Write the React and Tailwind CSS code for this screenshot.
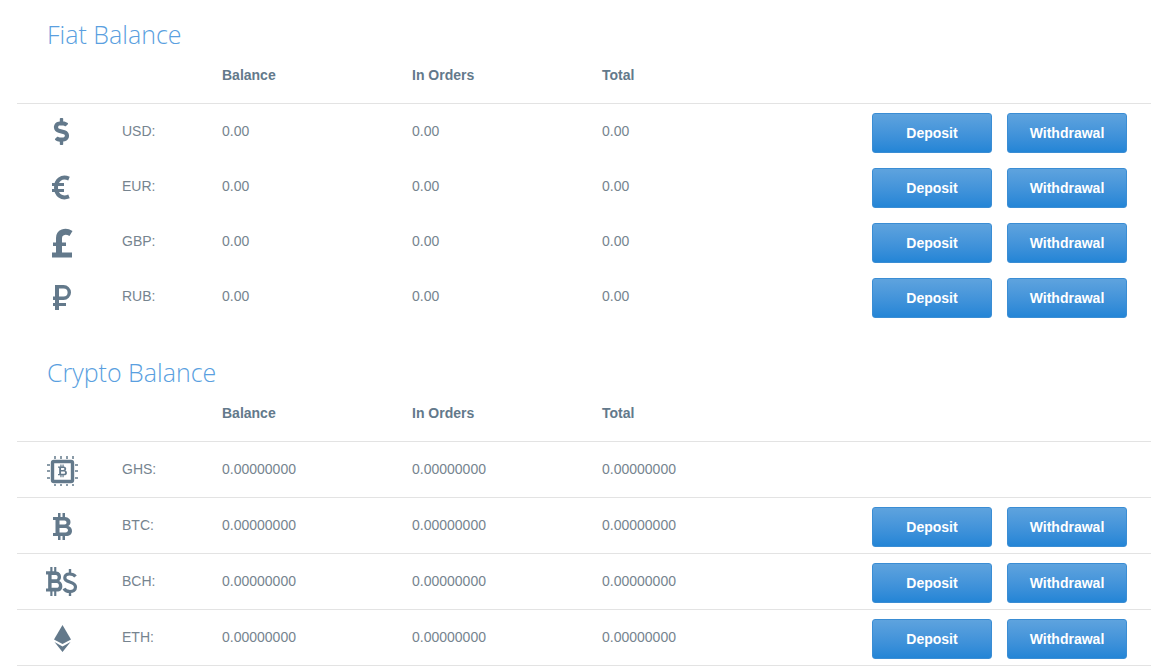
import React from "react";
import { FaDollarSign } from "react-icons/fa";

const Svg = ({ children }) => (
  <svg width="32" height="33" viewBox="0 0 32 33" className="text-[#63798b]" fill="currentColor" stroke="none">
    {children}
  </svg>
);

const BtcShape = () => (
  <path
    fillRule="evenodd"
    d="M5 0H7.5V4H9.5V0H12V4.1C15.6 4.5 17.5 6.4 17.5 9C17.5 10.9 16.7 12.3 15.3 13C17.6 13.7 19 15.6 19 18C19 21 16.8 23 13 23H12V27H9.5V23H7.5V27H5V23H0V20H2.5V7H0V4H5ZM6.5 7.5V11.5H11.5C13 11.5 13.5 10.5 13.5 9.5C13.5 8.5 13 7.5 11.5 7.5ZM6.5 15V19.5H12.5C14 19.5 15 18.5 15 17.3C15 16 14 15 12.5 15Z"
  />
);

const Dollar = () => <FaDollarSign className="text-[#63798b] text-[27px] mr-[2px]" />;

const Euro = () => (
  <Svg>
    <path d="M23 8.6C15.5 5.6 10 10 10 17.5C10 25 15.5 29.4 23 26.4" fill="none" stroke="currentColor" strokeWidth="4" />
    <path d="M6 13H18V16H6ZM6 19H18V22H6Z" />
  </Svg>
);

const Pound = () => (
  <Svg>
    <path d="M13 28V13C13 7.5 19 5 25 8.5" fill="none" stroke="currentColor" strokeWidth="6" />
    <path d="M6 27.5H26V32.5H6ZM7 17.5H20V21H7Z" />
  </Svg>
);

const Ruble = () => (
  <Svg>
    <path d="M11 5V30" fill="none" stroke="currentColor" strokeWidth="4" />
    <path d="M7 18.3H17.5A5.8 5.8 0 0 0 17.5 6.7H10" fill="none" stroke="currentColor" strokeWidth="3.4" />
    <path d="M7 23H20V26H7Z" />
  </Svg>
);

const Chip = () => (
  <Svg>
    <rect x="6.5" y="8.5" width="20" height="20" rx="1.5" fill="none" stroke="currentColor" strokeWidth="3.4" />
    <path
      opacity="0.75"
      d="M8 3h2v3H8zM14 3h2v3h-2zM20 3h2v3h-2zM26 3h2v3h-2zM8 31h2v2H8zM14 31h2v2h-2zM20 31h2v2h-2zM26 31h2v2h-2zM1 11h3v2H1zM1 17h3v2H1zM1 24h3v2H1zM29 11h3v2h-3zM29 17h3v2h-3zM29 24h3v2h-3z"
    />
    <g transform="translate(12 11.5) scale(0.47)">
      <BtcShape />
    </g>
  </Svg>
);

const Btc = () => (
  <Svg>
    <g transform="translate(7 4)">
      <BtcShape />
    </g>
  </Svg>
);

const Bch = () => (
  <Svg>
    <g transform="translate(0 2) scale(0.86 1.07)">
      <BtcShape />
    </g>
    <path d="M29.5 11.5C28 9.5 25.5 9 23.5 9C20.5 9 18.8 10.5 18.8 13C18.8 18 29.5 16 29.5 22C29.5 25 27 26.5 24 26.5C21.5 26.5 19 25.5 18 23.5" fill="none" stroke="currentColor" strokeWidth="3.2" />
    <path d="M22.8 4H25.2V8H22.8ZM22.8 27H25.2V31H22.8Z" />
  </Svg>
);

const Eth = () => (
  <Svg>
    <path d="M16.5 4L25 18.5L16.5 23L8 18.5Z" />
    <path d="M8.5 21L16.5 25.5L24.5 21L16.5 31Z" />
  </Svg>
);

const fiat = [
  ["USD:", <Dollar />],
  ["EUR:", <Euro />],
  ["GBP:", <Pound />],
  ["RUB:", <Ruble />],
];
const crypto = [
  ["GHS:", <Chip />, false],
  ["BTC:", <Btc />, true],
  ["BCH:", <Bch />, true],
  ["ETH:", <Eth />, true],
];

const grid = "grid grid-cols-[105px_100px_190px_190px_190px_1fr]";

const Btn = ({ children }) => (
  <button className="shrink-0 w-[120px] h-[40px] rounded-[3px] border border-[#3a8dd4] bg-gradient-to-b from-[#5ea3de] to-[#2385d6] text-white text-[14px] font-bold">
    {children}
  </button>
);

const Header = () => (
  <div className={`${grid} h-[53px] border-b border-[#e3e3e3] font-bold text-[14px] leading-[20px] text-[#63798b] pt-[14px]`}>
    <div />
    <div />
    <div>Balance</div>
    <div>In Orders</div>
    <div>Total</div>
    <div />
  </div>
);

const Row = ({ label, icon, val, buttons = true, border }) => (
  <div className={`${grid} ${border ? "h-[56px] border-b border-[#e3e3e3]" : "h-[55px]"} text-[14px] leading-[20px] text-[#76848f]`}>
    <div className="flex items-center justify-center pr-[15px]">{icon}</div>
    <div className="flex items-center pb-[2px]">{label}</div>
    <div className="flex items-center pb-[2px]">{val}</div>
    <div className="flex items-center pb-[2px]">{val}</div>
    <div className="flex items-center pb-[2px]">{val}</div>
    <div className="flex justify-end gap-[15px] pr-[24px] pt-[9px]">
      {buttons && (
        <>
          <Btn>Deposit</Btn>
          <Btn>Withdrawal</Btn>
        </>
      )}
    </div>
  </div>
);

const Title = ({ children, cls }) => (
  <h2 className={`pl-[30px] font-['Open_Sans',sans-serif] font-light text-[25px] leading-[33px] text-[#5a9fe0] ${cls}`}>{children}</h2>
);

export default function App() {
  return (
    <div className="w-[1151px] h-[670px] bg-white overflow-hidden pl-[17px] font-['Liberation_Sans',sans-serif]">
      <Title cls="pt-[18px]">Fiat Balance</Title>
      <Header />
      {fiat.map(([l, i]) => <Row key={l} label={l} icon={i} val="0.00" />)}
      <Title cls="pt-[32px]">Crypto Balance</Title>
      <Header />
      {crypto.map(([l, i, b]) => <Row key={l} label={l} icon={i} val="0.00000000" buttons={b} border />)}
    </div>
  );
}
